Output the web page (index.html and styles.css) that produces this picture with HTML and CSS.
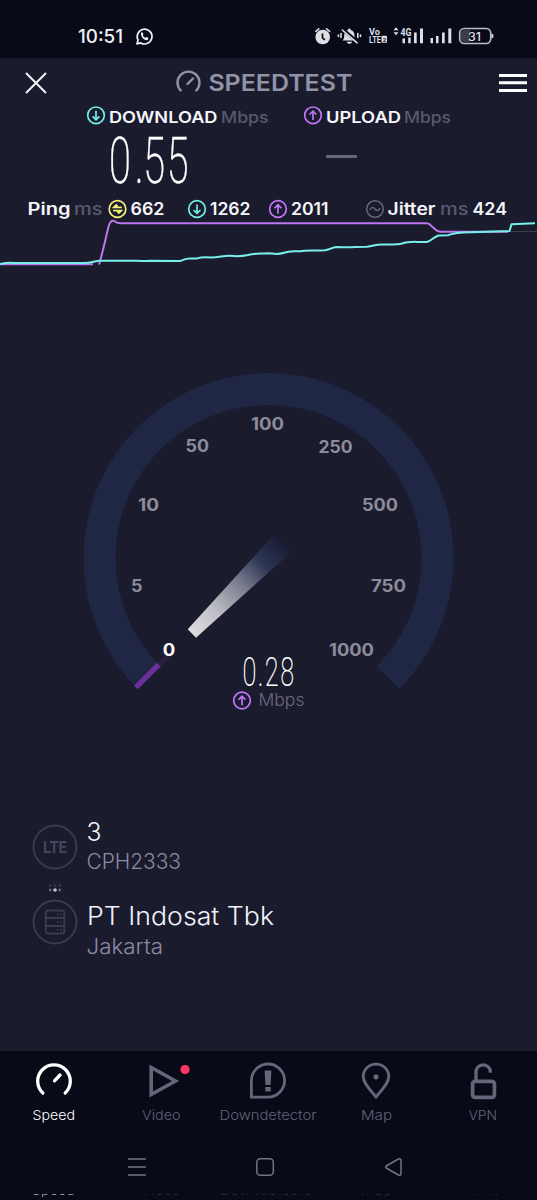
FILE: index.html
```html
<!DOCTYPE html>
<html lang="en">
<head>
<meta charset="utf-8">
<title>Speedtest</title>
<link rel="stylesheet" href="styles.css">
</head>
<body>
<svg class="symbols" aria-hidden="true">
  <symbol id="down" viewBox="0 0 20 20"><circle cx="10" cy="10" r="8.3"/><path d="M10 5.4v9M6.6 11 10 14.4 13.4 11"/></symbol>
  <symbol id="up" viewBox="0 0 20 20"><circle cx="10" cy="10" r="8.3"/><path d="M10 14.8v-9M6.6 9.2 10 5.8 13.4 9.2"/></symbol>
  <symbol id="idle" viewBox="0 0 20 20"><circle cx="10" cy="10" r="8.3"/><path d="M14.300 8.300H6.200L9.300 5.300M5.700 11.700h8.100L10.700 14.700M6.500 8.300H9.500V6M13.500 11.700H10.500V14"/></symbol>
  <symbol id="jitter" viewBox="0 0 20 20"><circle cx="10" cy="10" r="8.3"/><path d="M5 11c1.3-3.3 3.2-3.3 5-1s3.700 2.300 5-1"/></symbol>
</svg>
<div class="phone">
  <header class="status">
    <svg class="clock" width="80" height="24">
      <text x="0" y="19" textLength="45" lengthAdjust="spacingAndGlyphs">10:51</text>
      <g transform="translate(66.3 12.400)"><path class="wa" d="M-7.300 7.400-6.200 3.700A7.400 7.400 0 1 1-3.500 6.500Z"/><path class="waf" d="M-3-3.900c.6-.6 1.300-.4 1.500.2l.6 1.500c.1.500-.7 1-.6 1.300.5 1 1.300 1.700 2.300 2.200.5.200.8-.9 1.400-.7l1.600.8c.6.4.2 1.400-.3 1.900C1.300 5.200-4.600.4-3-3.900Z"/></g>
    </svg>
    <svg class="indicators" width="182" height="24">
      <g transform="translate(-312 -24)">
        <circle cx="322.700" cy="37" r="7.300"/>
        <path class="ln" d="M315.800 31.300 318.800 28.800M329.600 31.300 326.600 28.800" />
        <path class="cut" d="M322.500 33.500v4.300l2.400 2"/>
        <path d="M342.500 40.500c1.800-1.500 1.500-3 1.800-6 .3-2.600 1.900-4 3.700-4.400 0-2 2.700-2 2.700 0 1.900.4 3.400 1.800 3.700 4.400.3 3 0 4.500 1.800 6ZM346.700 41.700h5.400c-.8 2.700-4.600 2.700-5.400 0Z"/>
        <path class="slash" d="m342.500 29 15.500 13.500"/><path class="thin" d="m342.300 30 14.800 12.800"/>
        <path class="thin" d="M341 33.500v4M338.400 35v1.500M357.800 33.500v4M360.500 35v1.500"/>
        <text class="volte" x="369" y="34.800" textLength="11" lengthAdjust="spacingAndGlyphs">Vo</text>
        <text class="volte" x="369" y="42.800" textLength="12" lengthAdjust="spacingAndGlyphs">LTE</text>
        <rect x="381.500" y="35.800" width="5.500" height="7" rx="1"/><text class="two" x="382.700" y="41.800">2</text>
        <path d="m393.500 30.300 2.500-3 2.500 3ZM393.500 32.300l2.500 3 2.500-3Z"/>
        <text class="fourg" x="400.500" y="36" textLength="11" lengthAdjust="spacingAndGlyphs">4G</text>
        <path d="M402.500 38.500h2.500v4.700h-2.500ZM408.200 37.500h2.500v5.700h-2.500ZM414 32.500h2.700v10.700H414ZM420 28.500h3v14.700h-3ZM430.500 38h2.500v5.200h-2.500ZM436 36h2.500v7.200H436ZM442 32.500h2.700v10.700H442ZM448.300 28.500h3v14.700h-3Z"/>
        <path class="charge" d="M464 30h6v12h-6q-3 0-3-3v-6q0-3 3-3Z"/>
        <rect class="cell" x="459.700" y="28.500" width="31" height="15" rx="4.500"/><path d="M491.500 33.500q2 0 2 2.500t-2 2.500Z"/>
        <text class="pct" x="468" y="40.500" textLength="13" lengthAdjust="spacingAndGlyphs">31</text>
      </g>
    </svg>
  </header>

  <main class="app">
    <div class="bar">
      <svg class="close" width="24" height="24"><path d="M2 2 22 22M22 2 2 22"/></svg>
      <svg class="brand" width="178" height="26">
        <path d="M4.800 20.500A11 11 0 1 1 20.200 20.500M11.500 14l5.500-5.500"/>
        <text x="32.400" y="21" textLength="144" lengthAdjust="spacingAndGlyphs">SPEEDTEST</text>
      </svg>
      <svg class="menu" width="28" height="20"><path d="M0 3.500h28M0 10.800h28M0 18.400h28"/></svg>
    </div>

    <section class="results">
      <div class="result">
        <svg class="metric" width="184" height="22">
          <use class="cyan" href="#down" x="0" y="0.300" width="20" height="20"/>
          <text x="23" y="17.500" textLength="108.500" lengthAdjust="spacingAndGlyphs">DOWNLOAD</text>
          <text class="unit" x="135" y="17.500" textLength="47.500" lengthAdjust="spacingAndGlyphs">Mbps</text>
        </svg>
        <svg class="big" width="82" height="56"><text transform="scale(.62 1)" x="-1.500 40 53.500 91.500" y="51">0.55</text></svg>
      </div>
      <div class="result">
        <svg class="metric" width="150" height="22">
          <use class="violet" href="#up" x="0" y="0.300" width="20" height="20"/>
          <text x="23" y="17.500" textLength="75" lengthAdjust="spacingAndGlyphs">UPLOAD</text>
          <text class="unit" x="101" y="17.500" textLength="47" lengthAdjust="spacingAndGlyphs">Mbps</text>
        </svg>
        <div class="dash"></div>
      </div>
    </section>

    <section class="pings">
      <svg class="metric ping" width="138" height="22">
        <text x="-.5" y="16.400" textLength="43" lengthAdjust="spacingAndGlyphs">Ping</text>
        <text class="unit" x="46" y="16.400" textLength="28.500" lengthAdjust="spacingAndGlyphs">ms</text>
        <use class="yellow" href="#idle" x="79.500" y="0" width="20" height="20"/>
        <text x="102.500" y="16.400" textLength="34" lengthAdjust="spacingAndGlyphs">662</text>
      </svg>
      <svg class="metric" width="64" height="22"><use class="cyan" href="#down" width="20" height="20"/><text x="23" y="16.400" textLength="40.500" lengthAdjust="spacingAndGlyphs">1262</text></svg>
      <svg class="metric" width="61" height="22"><use class="violet" href="#up" width="20" height="20"/><text x="23" y="16.400" textLength="37.500" lengthAdjust="spacingAndGlyphs">2011</text></svg>
      <svg class="metric" width="143" height="22">
        <use class="gray" href="#jitter" width="20" height="20"/>
        <text x="22.500" y="16.400" textLength="48" lengthAdjust="spacingAndGlyphs">Jitter</text>
        <text class="unit" x="75" y="16.400" textLength="28.500" lengthAdjust="spacingAndGlyphs">ms</text>
        <text x="107.500" y="16.400" textLength="34.500" lengthAdjust="spacingAndGlyphs">424</text>
      </svg>
    </section>

    <svg class="chart" width="537" height="48" viewBox="0 219 537 48">
      <path class="base" d="M508 231.500h29"/>
      <path class="pv" d="M0 264.300H93M99 264.500C101.500 258 106 236 109 225Q111 219 115 221.500Q117 223.300 121 223.300H426Q429 223 431.500 226L436 230Q438 232 442 231.700H508"/>
      <path class="cy" d="M0 264C4 263 8 262 15 263H84C92 263 94 261 100 260.700H126C135 260.500 140 261.500 150 260.700L180 261C184 260 184 258.500 190 258.400H197C202 256.800 206 257 211 257.500C220 257.500 222 255.700 230 255.800C238 256.700 242 256.300 248 255C255 253 260 253.700 267 253.200C273 253.300 277 255 283 253C290 250.500 291 251.300 300 251.200C308 250 313 251 325 250.300C332 249 332 247 338 247C350 247.700 356 246.700 367 246.700C375 245.500 376 244.300 383 244.500C392 244.700 398 244.800 402 243.500C409 241 412 242 427 242C431 241 435 236 439 235.400L448 235.200C456 233 455 232.700 464 232.500L509.500 231L511.500 224.200L535 223.200"/>
    </svg>

    <svg class="gauge" width="380" height="350" viewBox="80 368 380 350">
      <defs>
        <linearGradient id="needle" gradientUnits="userSpaceOnUse" x1="192" y1="633" x2="282" y2="543">
          <stop offset="0" stop-color="#deddE1"/><stop offset=".25" stop-color="#bfbfc6"/><stop offset=".55" stop-color="#777b8c"/><stop offset=".78" stop-color="#2c3554"/><stop offset="1" stop-color="#1b1e34"/>
        </linearGradient>
      </defs>
      <path class="ring" d="M149 677.500A169 169 0 1 1 388 677.500"/>
      <path class="glow" d="m156.700 663.300 9-9 5 3-10 9Z"/>
      <path class="level" d="M134 685.500 137.700 689.200 160.700 666.500 156.700 662.800Z"/>
      <path fill="url(#needle)" d="M187.700 629.300 273.500 535 291.700 551.700 196 637.700Z"/>
      <g class="ticks">
        <text x="251" y="429.500" textLength="33" lengthAdjust="spacingAndGlyphs">100</text>
        <text x="185.500" y="452" textLength="23.500" lengthAdjust="spacingAndGlyphs">50</text>
        <text x="318.500" y="453" textLength="34" lengthAdjust="spacingAndGlyphs">250</text>
        <text x="138" y="511" textLength="21" lengthAdjust="spacingAndGlyphs">10</text>
        <text x="362" y="511" textLength="36" lengthAdjust="spacingAndGlyphs">500</text>
        <text x="131" y="592" textLength="11.500" lengthAdjust="spacingAndGlyphs">5</text>
        <text x="371" y="592" textLength="35" lengthAdjust="spacingAndGlyphs">750</text>
        <text class="on" x="162.800" y="656" textLength="12.500" lengthAdjust="spacingAndGlyphs">0</text>
        <text x="329" y="656" textLength="45" lengthAdjust="spacingAndGlyphs">1000</text>
      </g>
      <text class="live" transform="translate(243 686) scale(.61 1)" x="-1 24 35.500 61" y="0">0.28</text>
      <use class="violet" href="#up" x="232" y="690.500" width="20" height="20"/>
      <text class="liveunit" x="258.500" y="706" textLength="46" lengthAdjust="spacingAndGlyphs">Mbps</text>
    </svg>

    <section class="hosts">
      <div class="host">
        <svg class="badge" width="46" height="46"><circle cx="23" cy="23" r="21.500"/><text x="11" y="29.200" textLength="24" lengthAdjust="spacingAndGlyphs">LTE</text></svg>
        <svg class="info" width="200" height="56">
          <text class="name" x="-.5" y="22" textLength="15" lengthAdjust="spacingAndGlyphs">3</text>
          <text class="sub" x="-.5" y="50.300" textLength="94.500" lengthAdjust="spacingAndGlyphs">CPH2333</text>
        </svg>
      </div>
      <svg class="dots" width="46" height="10"><g fill="#35354a"><circle cx="18.200" cy="2.500" r="1.400"/><circle cx="23" cy="2.500" r="1.500"/><circle cx="27.700" cy="2.500" r="1.400"/></g><g fill="#666678"><circle cx="18.200" cy="7" r="1.400"/><circle cx="27.700" cy="7" r="1.400"/></g><circle cx="23" cy="7" r="1.800" fill="#c0c0ca"/></svg>
      <div class="host server">
        <svg class="badge" width="46" height="46"><circle cx="23" cy="23" r="21.500"/><rect x="13.800" y="11.500" width="18.500" height="23" rx="2.500"/><path d="M13.800 19h18.500M13.800 27h18.500M25 15.500h1.500M28.500 15.500H30M25 23h1.500M28.500 23H30M25 31h1.500M28.500 31H30"/></svg>
        <svg class="info" width="200" height="56">
          <text class="name" x="0" y="22" textLength="187" lengthAdjust="spacingAndGlyphs">PT Indosat Tbk</text>
          <text class="sub" x="-.5" y="50.500" textLength="76.500" lengthAdjust="spacingAndGlyphs">Jakarta</text>
        </svg>
      </div>
    </section>
  </main>

  <nav class="tabs">
    <svg class="tab active" viewBox="0 0 100 80"><path class="st" d="M38.800 42A16.300 16.300 0 1 1 61.200 42M50.500 29.800 56 24"/><text x="28.500" y="68.500" textLength="42.500" lengthAdjust="spacingAndGlyphs">Speed</text></svg>
    <svg class="tab" viewBox="0 0 100 80"><path class="st tri" d="M40.200 16.500V43.500L64.500 30Z"/><circle class="dot" cx="74" cy="18.500" r="4.600"/><text x="31" y="68.500" textLength="38.500" lengthAdjust="spacingAndGlyphs">Video</text></svg>
    <svg class="tab" viewBox="0 0 100 80"><path class="st box" d="M33.400 46.200V30A16.600 16.600 0 1 1 50 46.200Z"/><path class="bang" d="M46.600 19.500h6.800l-.8 14.500h-5.200ZM47.300 36h5.400v4.500h-5.400Z"/><text x="1.500" y="68.500" textLength="97" lengthAdjust="spacingAndGlyphs">Downdetector</text></svg>
    <svg class="tab" viewBox="0 0 100 80"><path class="st pin" d="M50 46C44 38.500 37.200 32 37.200 25.500A12.600 12.200 0 0 1 62.800 25.500C62.800 32 56 38.500 50 46Z"/><circle cx="50" cy="25.800" r="2.600"/><text x="35" y="68.500" textLength="31" lengthAdjust="spacingAndGlyphs">Map</text></svg>
    <svg class="tab" viewBox="0 0 100 80"><rect class="st lock" x="39.600" y="30.300" width="21.800" height="16" rx="2.500"/><path class="st flat" d="M43 30V21a7.200 7.200 0 0 1 14.400 0v.8"/><text x="35.500" y="68.500" textLength="28.500" lengthAdjust="spacingAndGlyphs">VPN</text></svg>
  </nav>
  <div class="system">
    <svg width="20" height="20"><path d="M1 2h18M1 10h18M1 18h18"/></svg>
    <svg width="20" height="20"><rect x="1.800" y="1.800" width="16.500" height="16.500" rx="3.500"/></svg>
    <svg width="20" height="20"><path d="M3.200 9q-1.300 1 0 2l12.200 7q2.600.8 2.600-1.500v-13q0-2.200-2.600-1.500Z"/></svg>
  </div>
  <div class="echo">
    <svg viewBox="0 0 107.400 3"><text class="lit" x="32" y=".6" textLength="42.500">Speed</text></svg>
    <svg viewBox="0 0 107.400 3"><text x="34.600" y=".6" textLength="38.500">Video</text></svg>
    <svg viewBox="0 0 107.400 3"><text x="5.200" y=".6" textLength="97">Downdetector</text></svg>
    <svg viewBox="0 0 107.400 3"><text x="39.200" y=".6" textLength="31">Map</text></svg>
    <svg viewBox="0 0 107.400 3"><text x="39.700" y=".6" textLength="28.500">VPN</text></svg>
  </div>
</div>
</body>
</html>
```

FILE: styles.css
```css
body { margin: 0; background: #1b1b2e; font-family: Inter, "Noto Sans", sans-serif; }
svg { display: block; flex: none; }
text { stroke: none; }
.symbols { position: absolute; width: 0; height: 0; }
.phone { width: 537px; height: 1200px; display: flex; flex-direction: column; overflow: hidden; background: #080a18; }

.status { height: 58px; flex: none; display: flex; justify-content: space-between; padding: 24px 43px 0 78px; box-sizing: border-box; }
.clock text { font-size: 18.500px; font-weight: 500; fill: #f1f1f5; }
.wa { fill: none; stroke: #f1f1f5; stroke-width: 1.700; stroke-linejoin: round; }
.waf { fill: #f1f1f5; }
.indicators { fill: #dedee3; overflow: visible; }
.ln, .thin { fill: none; stroke: #dedee3; stroke-width: 1.600; stroke-linecap: round; }
.cut { fill: none; stroke: #080a18; stroke-width: 1.700; }
.slash { fill: none; stroke: #080a18; stroke-width: 3.500; }
.volte { font: 700 8.500px Roboto, sans-serif; }
.two { font: 700 6px Roboto, sans-serif; fill: #080a18; }
.fourg { font: 700 10.500px Roboto, sans-serif; }
.charge { fill: #3c3d48; }
.cell { fill: none; stroke: #bcbdc5; stroke-width: 1.600; }
.pct { font-size: 11.500px; font-weight: 500; }

.app { height: 992.700px; flex: none; background: #1b1b2e; display: flex; flex-direction: column; }
.bar { height: 47px; display: flex; align-items: flex-start; flex: none; }
.close { margin: 13px 0 0 24px; stroke: #f4f4f8; stroke-width: 2; }
.brand { margin: 12px 0 0 127.500px; fill: none; stroke: #9092a8; stroke-width: 2.400; stroke-linecap: round; overflow: visible; }
.brand text { fill: #9092a8; font-size: 22.500px; font-weight: 600; }
.menu { margin: 14px 0 0 145px; stroke: #fff; stroke-width: 3; }

.results { display: flex; height: 94px; flex: none; padding-left: 85.500px; gap: 33.500px; }
.result { display: flex; flex-direction: column; }
.metric { overflow: visible; }
.metric text { font-size: 16.200px; font-weight: 600; fill: #f6f6fa; }
.metric .unit { font-weight: 500; fill: #595a6e; }
.cyan, .violet, .yellow, .gray { fill: none; stroke-width: 1.700; }
.cyan { stroke: #70efe6; }
.violet { stroke: #c175f8; }
.yellow { stroke: #f5f07a; }
.gray { stroke: #66677a; stroke-width: 1.500; }
.big { margin: 5px 0 0 24px; overflow: visible; }
.big text { font: 200 64px Roboto, sans-serif; fill: #fff; stroke: #fff; stroke-width: .4; }
.dash { width: 31px; height: 3px; margin: 28px 0 0 23px; border-radius: 1px; background: #66677b; }

.pings { height: 20px; flex: none; display: flex; padding-left: 27.500px; }
.pings .metric text { font-size: 17px; }
.pings .metric:nth-child(2) { margin-left: 21.700px; }
.pings .metric:nth-child(3) { margin-left: 16.700px; }
.pings .metric:nth-child(4) { margin-left: 36px; }

.chart { fill: none; stroke-width: 2; stroke-linejoin: round; }
.base { stroke: #3d3d50; stroke-width: 1; }
.pv { stroke: #bb78ee; }
.cy { stroke: #78efea; }

.gauge { margin: 101px 0 0 80px; }
.ring { fill: none; stroke: #1f2744; stroke-width: 32; }
.glow { fill: #2c1d3c; }
.level { fill: #6c309b; }
.ticks { font-size: 17px; font-weight: 700; fill: #8c8c9a; }
.on { fill: #fff; }
.live { font: 200 41.500px Roboto, sans-serif; fill: #fff; stroke: #fff; stroke-width: .1; }
.liveunit { font-size: 16.800px; font-weight: 300; fill: #6b6b7e; }

.hosts { margin: 101px 0 0 32.300px; display: flex; flex-direction: column; }
.host { display: flex; height: 56px; gap: 8.500px; }
.badge { margin-top: 5px; fill: none; stroke: #3b3b50; stroke-width: 1.900; }
.server .badge { margin-top: -4px; }
.badge text { fill: #45455b; font: 700 17px Roboto, sans-serif; }
.info { overflow: visible; }
.name { font-size: 25.200px; font-weight: 350; fill: #f1f2fa; }
.sub { font-size: 20.800px; font-weight: 300; fill: #8b8ca2; }
.dots { margin: 8px 0 10px; }

.tabs { height: 84px; flex: none; display: grid; grid-template-columns: repeat(5, 1fr); justify-items: center; }
.tab { width: 100px; height: 80px; fill: #65667a; overflow: visible; }
.tab text { font-size: 13.600px; font-weight: 350; fill: #626377; }
.tab.active text { fill: #fff; }
.st { fill: none; stroke: #65667a; stroke-width: 3.300; stroke-linecap: round; }
.active .st { stroke: #fff; }
.tri { stroke-width: 3.600; stroke-linecap: butt; }
.box, .pin { stroke-width: 2.800; }
.lock { stroke-width: 3.700; }
.flat { stroke-linecap: butt; }
.dot { fill: #ff3767; }

.system { height: 59.300px; flex: none; display: flex; padding: 22.300px 0 0 127px; gap: 108px; box-sizing: border-box; }
.system svg { fill: none; stroke: #74747e; stroke-width: 1.500; }
.echo { height: 3px; flex: none; display: grid; grid-template-columns: repeat(5, 1fr); }
.echo svg { width: 107.400px; height: 3px; overflow: hidden; }
.echo text { font-size: 13.600px; font-weight: 350; fill: #2e2f3d; }
.echo .lit { fill: #a8a8b0; }
```
